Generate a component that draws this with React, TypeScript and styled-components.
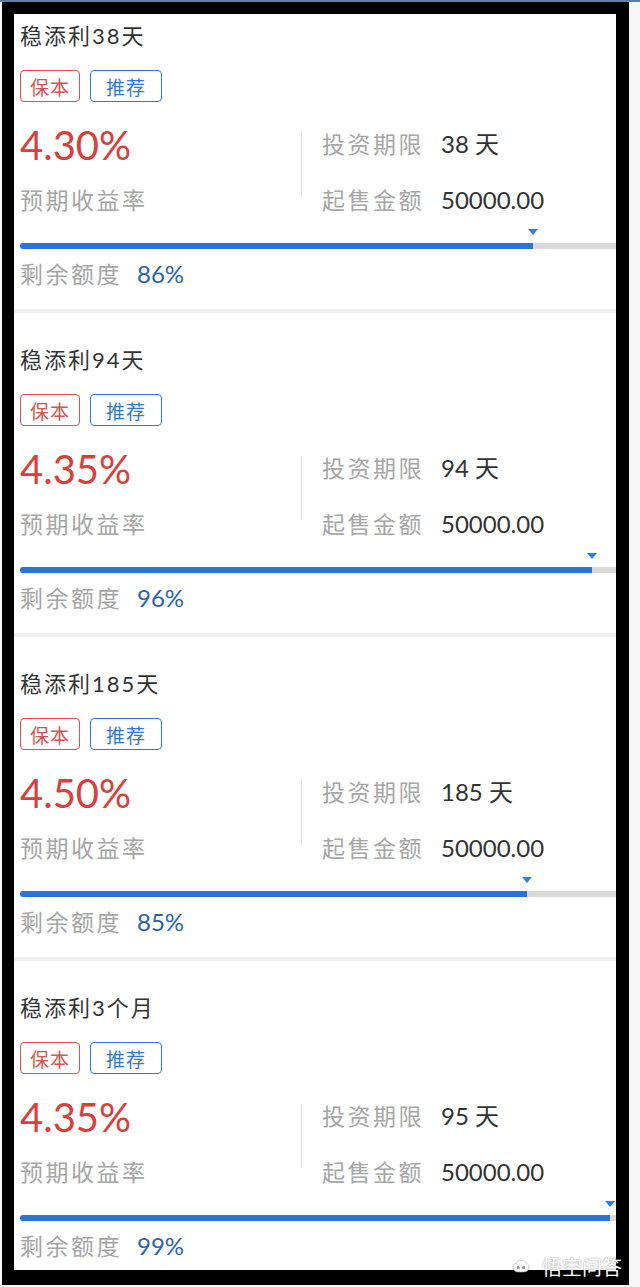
import styled, { createGlobalStyle } from "styled-components";

type Product = {
  name: string;
  rate: string;
  term: string;
  min: string;
  left: number;
};

const products: Product[] = [
  { name: "稳添利38天", rate: "4.30%", term: "38 天", min: "50000.00", left: 86 },
  { name: "稳添利94天", rate: "4.35%", term: "94 天", min: "50000.00", left: 96 },
  { name: "稳添利185天", rate: "4.50%", term: "185 天", min: "50000.00", left: 85 },
  { name: "稳添利3个月", rate: "4.35%", term: "95 天", min: "50000.00", left: 99 },
];

const GlobalStyle = createGlobalStyle`
  html, body {
    margin: 0;
    padding: 0;
    background: #f4f4f4;
    overflow: hidden;
  }
  * {
    box-sizing: border-box;
  }
`;

const ProductCard = ({ p }: { p: Product }) => {
  return (
    <Card>
      <Title>{p.name}</Title>
      <Tags>
        <Tag col="#d9534f" pad={9}>保本</Tag>
        <Tag col="#3079d4" pad={15}>推荐</Tag>
      </Tags>
      <Stats>
        <RateCol>
          <Rate>{p.rate}</Rate>
          <Label>预期收益率</Label>
        </RateCol>
        <Divider />
        <InfoCol>
          <InfoRow>
            <Label>投资期限</Label>
            <Value>{p.term}</Value>
          </InfoRow>
          <InfoRow>
            <Label>起售金额</Label>
            <Value>{p.min}</Value>
          </InfoRow>
        </InfoCol>
      </Stats>
      <MarkerRow>
        <Pointer style={{ marginLeft: `calc(${p.left}% - 5px)` }} />
      </MarkerRow>
      <Track>
        <Fill style={{ width: `${p.left}%` }} />
      </Track>
      <Remain>
        <Label>剩余额度</Label>
        <Percent>{p.left}%</Percent>
      </Remain>
    </Card>
  );
};

const App = () => {
  return (
    <Page>
      <GlobalStyle />
      <Frame>
        <List>
          {products.map((p) => (
            <ProductCard key={p.name} p={p} />
          ))}
        </List>
      </Frame>
      <Watermark>
        <svg width="18" height="15" viewBox="0 0 20 16">
          <path
            d="M10 1c-3 0-5 1.6-5.6 3.6C2.4 4.9 1 6.6 1 8.6 1 11.6 3.6 14 7 14h6c3.4 0 6-2.4 6-5.4 0-2-1.4-3.7-3.4-4C15 2.6 13 1 10 1z"
            fill="#fff"
            stroke="#bbb"
            strokeWidth="0.8"
          />
          <circle cx="7" cy="9" r="1.8" fill="#999" />
          <circle cx="13" cy="9" r="1.8" fill="#999" />
        </svg>
        <span>悟空问答</span>
      </Watermark>
    </Page>
  );
};

export default App;

const Page = styled.div`
  position: relative;
  width: 640px;
  height: 1287px;
  padding: 0 11px 2px 2px;
  border-top: 2px solid #5b7fb0;
  background: #f6f6f6;
`;

const Frame = styled.div`
  width: 627px;
  height: 1283px;
  border-style: solid;
  border-color: #000;
  border-width: 12px 13px 15px 12px;
  background: #fff;
  overflow: hidden;
`;

const List = styled.div`
  margin-top: -25px;
  display: flex;
  flex-direction: column;
`;

const Card = styled.div`
  height: 324px;
  padding: 33px 0 0 6px;
  border-bottom: 4px solid #eeeeee;
  display: flex;
  flex-direction: column;
  font-family: "Lato", "Noto Sans CJK SC", sans-serif;
`;

const Title = styled.div`
  height: 28px;
  line-height: 28px;
  font-size: 22px;
  letter-spacing: 2px;
  color: #333;
`;

const Tags = styled.div`
  margin-top: 20px;
  display: flex;
  gap: 10px;
`;

const Tag = styled.div<{ col: string; pad: number }>`
  height: 32px;
  padding: 0 ${({ pad }) => pad}px;
  border: 1.5px solid ${({ col }) => col};
  border-radius: 4px;
  color: ${({ col }) => col};
  font-size: 19px;
  letter-spacing: 1px;
  display: flex;
  align-items: center;
`;

const Stats = styled.div`
  margin-top: 19px;
  display: flex;
  align-items: flex-start;
`;

const RateCol = styled.div`
  width: 281px;
  display: flex;
  flex-direction: column;
  gap: 15px;
`;

const Rate = styled.div`
  height: 48px;
  line-height: 48px;
  font-size: 40px;
  color: #d9403a;
`;

const Label = styled.span`
  height: 32px;
  line-height: 32px;
  font-size: 23px;
  letter-spacing: 2.5px;
  color: #a6a6a6;
  white-space: nowrap;
`;

const Divider = styled.div`
  width: 1px;
  height: 64px;
  margin-top: 11px;
  background: #dedede;
`;

const InfoCol = styled.div`
  padding: 7px 0 0 20px;
  display: flex;
  flex-direction: column;
  gap: 24px;
`;

const InfoRow = styled.div`
  display: flex;
  align-items: center;
  gap: 17px;
`;

const Value = styled.span`
  line-height: 32px;
  font-size: 24px;
  color: #333;
  white-space: nowrap;
`;

const MarkerRow = styled.div`
  margin-top: 13px;
  height: 6px;
  display: flex;
`;

const Pointer = styled.div`
  width: 0;
  height: 0;
  border-left: 5px solid transparent;
  border-right: 5px solid transparent;
  border-top: 6px solid #2f80e0;
`;

const Track = styled.div`
  margin-top: 8px;
  height: 6px;
  width: 596px;
  background: #d9d9d9;
  border-radius: 3px 0 0 3px;
  display: flex;
`;

const Fill = styled.div`
  height: 100%;
  background: #2a74d6;
  border-radius: 3px 0 0 3px;
`;

const Remain = styled.div`
  margin-top: 9px;
  display: flex;
  align-items: center;
  gap: 15px;
`;

const Percent = styled.span`
  line-height: 32px;
  font-size: 24px;
  color: #2b63ad;
`;

const Watermark = styled.div`
  position: absolute;
  left: 512px;
  top: 1250px;
  display: flex;
  align-items: center;
  gap: 12px;
  font-family: "Noto Sans CJK SC", sans-serif;
  font-size: 20px;
  color: #fff;
  text-shadow: 0 0 2px rgba(0, 0, 0, 0.45);
`;
